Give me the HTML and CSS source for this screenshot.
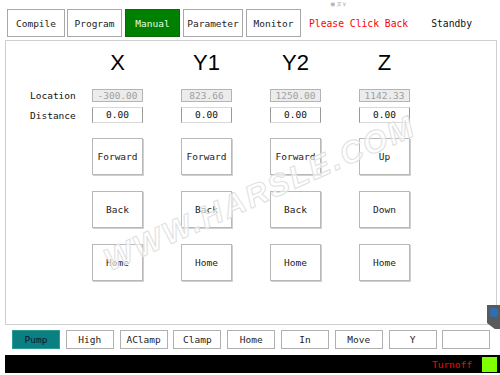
FILE: index.html
```html
<!DOCTYPE html>
<html lang="en">
<head>
  <meta charset="UTF-8" />
  <title>Manual</title>
  <link rel="stylesheet" href="styles.css">
</head>
<body>
  <div class="screen">
    <header class="topbar">
      <button class="tab">Compile</button>
      <button class="tab">Program</button>
      <button class="tab active">Manual</button>
      <button class="tab">Parameter</button>
      <button class="tab">Monitor</button>
      <span class="notice">Please Click Back</span>
      <span class="state">Standby</span>
      <span class="mini-icon">▦ヌ∨</span>
    </header>

    <section class="panel">
      <div class="row head-row">
        <span class="label"></span>
        <span class="axis">X</span>
        <span class="axis">Y1</span>
        <span class="axis">Y2</span>
        <span class="axis">Z</span>
      </div>
      <div class="row loc-row">
        <span class="label">Location</span>
        <span class="value readonly">-300.00</span>
        <span class="value readonly">823.66</span>
        <span class="value readonly">1250.00</span>
        <span class="value readonly">1142.33</span>
      </div>
      <div class="row dist-row">
        <span class="label">Distance</span>
        <span class="value">0.00</span>
        <span class="value">0.00</span>
        <span class="value">0.00</span>
        <span class="value">0.00</span>
      </div>
      <div class="row btn-row">
        <span class="label"></span>
        <button class="jog">Forward</button>
        <button class="jog">Forward</button>
        <button class="jog">Forward</button>
        <button class="jog">Up</button>
      </div>
      <div class="row btn-row">
        <span class="label"></span>
        <button class="jog">Back</button>
        <button class="jog">Back</button>
        <button class="jog">Back</button>
        <button class="jog">Down</button>
      </div>
      <div class="row btn-row">
        <span class="label"></span>
        <button class="jog">Home</button>
        <button class="jog">Home</button>
        <button class="jog">Home</button>
        <button class="jog">Home</button>
      </div>

      <span class="watermark">WWW.HARSLE.COM</span>
      <span class="side-tab"><span class="side-icon"></span></span>
    </section>

    <nav class="toolbar">
      <button class="tool on">Pump</button>
      <button class="tool">High</button>
      <button class="tool">AClamp</button>
      <button class="tool">Clamp</button>
      <button class="tool">Home</button>
      <button class="tool">In</button>
      <button class="tool">Move</button>
      <button class="tool">Y</button>
      <button class="tool"></button>
    </nav>

    <footer class="status">
      <span class="turnoff">Turnoff</span>
      <span class="lamp"></span>
    </footer>
  </div>
</body>
</html>
```

FILE: styles.css
```css
body {
  margin: 0;
  background: #fff;
  font-family: "DejaVu Sans Mono", monospace;
  color: #222;
}

.screen {
  width: 500px;
  height: 375px;
  overflow: hidden;
}

button {
  font-family: inherit;
  cursor: pointer;
}

/* top tabs */
.topbar {
  position: relative;
  display: flex;
  align-items: center;
  height: 28px;
  padding: 9px 0 3px 7px;
}

.tab {
  height: 28px;
  margin-right: 2px;
  padding: 0;
  background: #fff;
  border: 1px solid #a8a8a8;
  font-size: 9.5px;
  color: #222;
}

.tab:nth-child(1) { width: 58px; }
.tab:nth-child(2) { width: 55px; margin-right: 3px; }
.tab:nth-child(3) { width: 55px; margin-right: 3px; }
.tab:nth-child(4) { width: 60px; margin-right: 3px; }
.tab:nth-child(5) { width: 55px; }

.tab.active {
  background: #008000;
  border-color: #0a6a0a;
  color: #e4ffe4;
}

.notice {
  margin-left: 6px;
  font-size: 9.7px;
  color: #f00;
}

.state {
  margin-left: 23px;
  font-size: 9.7px;
  color: #111;
}

.mini-icon {
  position: absolute;
  left: 331px;
  top: 0;
  font-size: 6px;
  color: #aaa;
  letter-spacing: 1px;
}

/* main panel */
.panel {
  position: relative;
  margin-left: 5px;
  width: 490px;
  height: 283px;
  border: 1px solid #cfcfcf;
  overflow: visible;
}

.row {
  display: flex;
  align-items: center;
  gap: 38px;
}

.label {
  width: 62px;
  margin-right: -38px;
  padding-left: 24px;
  font-size: 9.5px;
  color: #111;
}

.head-row {
  height: 44px;
}

.axis {
  width: 51px;
  text-align: center;
  font-family: "Liberation Sans", Arial, sans-serif;
  font-size: 22px;
  color: #000;
}

.value {
  width: 49px;
  height: 14px;
  line-height: 14px;
  text-align: center;
  font-size: 9.5px;
  background: #fff;
  border: 1px solid #d8d8d8;
  border-left-color: #999;
  border-right-color: #999;
  color: #111;
}

.loc-row {
  margin-top: 4px;
}

.value.readonly {
  height: 11px;
  line-height: 11px;
  background: #ececec;
  border-color: #b4b4b4;
  color: #a0a0a0;
}

.dist-row {
  margin-top: 5px;
}

.btn-row {
  margin-top: 15px;
}

.btn-row + .btn-row {
  margin-top: 16px;
}

.jog {
  width: 51px;
  height: 37px;
  padding: 0;
  background: #fff;
  border: 1px solid #b8b8b8;
  box-shadow: 1px 1px 0 #d0d0d0;
  font-size: 9.5px;
  color: #222;
}

.watermark {
  position: absolute;
  left: 100px;
  top: 203px;
  transform: rotate(-24deg);
  transform-origin: left center;
  font-family: "Liberation Sans", Arial, sans-serif;
  font-size: 31px;
  font-weight: bold;
  font-style: italic;
  letter-spacing: 2.5px;
  color: rgba(255, 255, 255, 0.6);
  -webkit-text-stroke: 1px #e0e0e0;
  pointer-events: none;
}

.side-tab {
  position: absolute;
  right: -4px;
  top: 264px;
  width: 13px;
  height: 24px;
  background: #5a5a5a;
  clip-path: polygon(0 0, 100% 0, 100% 100%, 60% 100%, 0 75%);
}

.side-icon {
  position: absolute;
  left: 3px;
  top: 3px;
  width: 8px;
  height: 9px;
  border-radius: 2px;
  background: #2f6fb0;
}

/* bottom buttons */
.toolbar {
  display: flex;
  gap: 5.8px;
  padding: 5px 0 0 12px;
  height: 19px;
}

.tool {
  width: 48px;
  height: 19px;
  padding: 0;
  background: #fff;
  border: 1px solid #b0b0b0;
  font-size: 9.5px;
  color: #222;
}

.tool.on {
  background: #0a8080;
  border-color: #2a9a9a;
  color: #113;
}

.status {
  display: flex;
  align-items: center;
  justify-content: flex-end;
  gap: 10px;
  margin: 6px 0 0 5px;
  height: 18px;
  padding-right: 3px;
  background: #000;
}

.turnoff {
  font-size: 9.5px;
  color: #f00;
}

.lamp {
  width: 15px;
  height: 15px;
  background: #80ff00;
}
```
